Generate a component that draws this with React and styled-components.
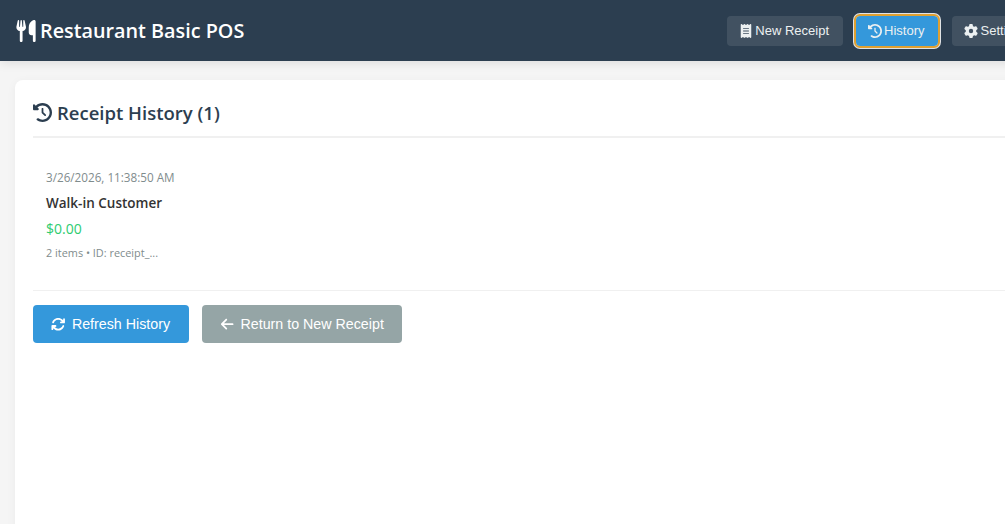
import React from 'react';
import styled, { createGlobalStyle } from 'styled-components';
import { FaUtensils, FaReceipt, FaClockRotateLeft, FaGear, FaArrowsRotate, FaArrowLeft } from 'react-icons/fa6';

const GlobalStyle = createGlobalStyle`
    html, body {
        margin: 0;
        height: 100%;
        overflow: hidden;
        background: #f5f5f5;
    }

    body {
        font-family: "Open Sans", "Noto Sans", sans-serif;
        color: #2c3e50;
    }
`;

const Page = styled.div`
    width: 1056px;
`;

const Header = styled.header`
    align-items: center;
    background: #2c3e50;
    box-shadow: 0 2px 10px rgba(0, 0, 0, 0.1);
    box-sizing: border-box;
    display: flex;
    height: 61px;
    justify-content: space-between;
    padding: 0 15px;
`;

const Logo = styled.h1`
    align-items: center;
    color: #fff;
    display: flex;
    font-size: 19.8px;
    font-weight: 600;
    gap: 3px;
    margin: 0;

    svg {
        height: 22px;
        width: auto;
    }
`;

const Nav = styled.nav`
    display: flex;
    gap: 11px;
`;

const NavButton = styled.button`
    align-items: center;
    background: ${(props) => (props.$active ? '#3498db' : 'rgba(255, 255, 255, 0.1)')};
    border: none;
    border-radius: 4px;
    box-shadow: ${(props) => (props.$active ? '0 0 0 3px rgba(255, 255, 255, 0.85)' : 'none')};
    box-sizing: border-box;
    color: #ecf0f1;
    display: flex;
    font-family: "Liberation Sans", Arial, sans-serif;
    font-size: 13px;
    gap: 2.5px;
    height: 30px;
    margin: ${(props) => (props.$active ? '0 3px 0 2px' : '0')};
    outline: ${(props) => (props.$active ? '2px solid #e0a030' : 'none')};
    padding: 0 13.5px 0 12px;

    svg {
        height: 14px;
        width: auto;
    }
`;

const Main = styled.main`
    padding: 19px 15px 0;
`;

const Card = styled.section`
    background: #fff;
    border-radius: 8px;
    box-shadow: 0 2px 10px rgba(0, 0, 0, 0.05);
    box-sizing: border-box;
    height: 460px;
    padding: 18px;
`;

const CardTitle = styled.h2`
    align-items: center;
    border-bottom: 2px solid #f0f0f0;
    color: #2c3e50;
    display: flex;
    font-size: 18.5px;
    font-weight: 600;
    gap: 5px;
    height: 28px;
    margin: 0 0 25px;
    padding-bottom: 10px;

    svg {
        font-size: 19px;
    }
`;

const ReceiptItem = styled.article`
    border-bottom: 1px solid #f0f0f0;
    height: 127px;
    padding-left: 13px;
`;

const ReceiptDate = styled.div`
    color: #7f8c8d;
    font-size: 11.7px;
    line-height: 20px;
    padding-top: 4px;
`;

const CustomerName = styled.div`
    color: #333;
    font-size: 13.5px;
    font-weight: 600;
    line-height: 20px;
    margin-top: 6px;
`;

const ReceiptTotal = styled.div`
    color: #2ecc71;
    font-size: 14px;
    font-weight: 500;
    line-height: 20px;
    margin-top: 6px;
`;

const ReceiptMeta = styled.div`
    color: #7f8c8d;
    font-size: 10.9px;
    line-height: 16px;
    margin-top: 6px;
`;

const Actions = styled.div`
    display: flex;
    gap: 13px;
    margin-top: 14px;
`;

const ActionButton = styled.button`
    align-items: center;
    background: ${(props) => (props.$secondary ? '#95a5a6' : '#3498db')};
    border: none;
    border-radius: 4px;
    color: #fff;
    display: flex;
    font-family: "Liberation Sans", Arial, sans-serif;
    font-size: 14.25px;
    gap: 6.5px;
    height: 38px;
    padding: 0 18.5px 0 18px;

    svg {
        height: 14.4px;
        width: auto;
    }
`;

const App = () => (
    <Page>
        <GlobalStyle />
        <Header>
            <Logo>
                <FaUtensils />
                Restaurant Basic POS
            </Logo>
            <Nav>
                <NavButton><FaReceipt />New Receipt</NavButton>
                <NavButton $active><FaClockRotateLeft />History</NavButton>
                <NavButton><FaGear />Settings</NavButton>
            </Nav>
        </Header>
        <Main>
            <Card>
                <CardTitle>
                    <FaClockRotateLeft />
                    Receipt History (1)
                </CardTitle>
                <ReceiptItem>
                    <ReceiptDate>3/26/2026, 11:38:50 AM</ReceiptDate>
                    <CustomerName>Walk-in Customer</CustomerName>
                    <ReceiptTotal>$0.00</ReceiptTotal>
                    <ReceiptMeta>2 items • ID: receipt_...</ReceiptMeta>
                </ReceiptItem>
                <Actions>
                    <ActionButton><FaArrowsRotate />Refresh History</ActionButton>
                    <ActionButton $secondary><FaArrowLeft />Return to New Receipt</ActionButton>
                </Actions>
            </Card>
        </Main>
    </Page>
);

export default App;
